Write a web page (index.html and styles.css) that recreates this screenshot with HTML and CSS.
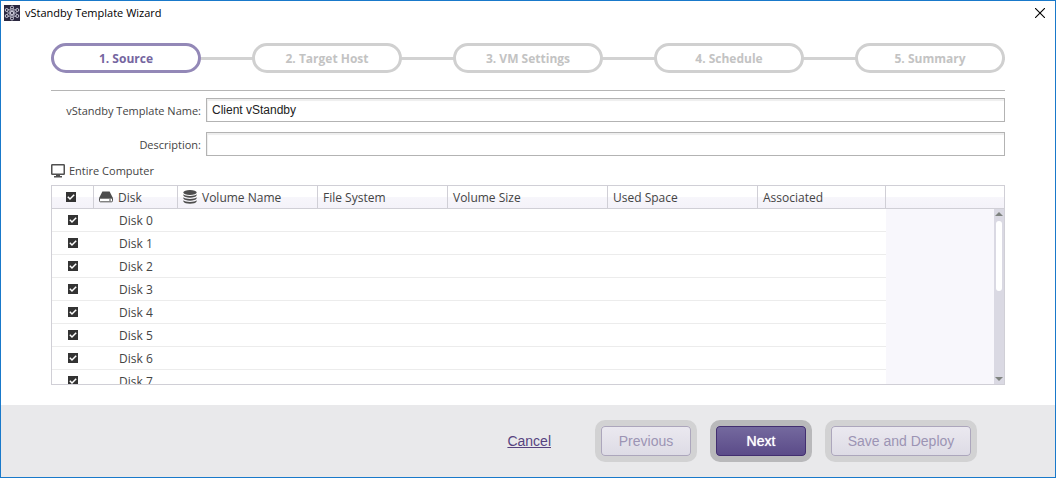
FILE: index.html
```html
<!DOCTYPE html>
<html lang="en">
<head>
<meta charset="utf-8">
<title>vStandby Template Wizard</title>
<link rel="stylesheet" href="styles.css">
</head>
<body>
<div class="window">
  <header class="titlebar">
    <svg class="app-icon" viewBox="0 0 16 16" aria-hidden="true">
      <rect width="16" height="16" fill="#2b2840"/>
      <g fill="none" stroke="#b3b1c2" stroke-width=".8">
        <ellipse cx="8" cy="8" rx="2.2" ry="5.6"/>
        <ellipse cx="8" cy="8" rx="2.2" ry="5.6" transform="rotate(60 8 8)"/>
        <ellipse cx="8" cy="8" rx="2.2" ry="5.6" transform="rotate(120 8 8)"/>
      </g>
      <g fill="#2b2840" stroke="#dddbe6" stroke-width=".9">
        <circle cx="8" cy="2.5" r="1.5"/><circle cx="8" cy="13.5" r="1.5"/>
        <circle cx="2.7" cy="5" r="1.5"/><circle cx="13.3" cy="5" r="1.5"/>
        <circle cx="2.7" cy="11" r="1.5"/><circle cx="13.3" cy="11" r="1.5"/>
        <circle cx="8" cy="8" r="1.6"/>
      </g>
    </svg>
    <h1 class="title">vStandby Template Wizard</h1>
    <button class="close" type="button" aria-label="Close">
      <svg viewBox="0 0 10 10" aria-hidden="true"><path d="M0 0L10 10M10 0L0 10" stroke="#000" stroke-width="1.1"/></svg>
    </button>
  </header>

  <main class="content">
    <ol class="steps">
      <li class="step current" aria-current="step">1. Source</li>
      <li class="step">2. Target Host</li>
      <li class="step">3. VM Settings</li>
      <li class="step">4. Schedule</li>
      <li class="step">5. Summary</li>
    </ol>

    <form class="fields">
      <label for="name">vStandby Template Name:</label>
      <input class="text" id="name" type="text" value="Client vStandby">
      <label for="desc">Description:</label>
      <input class="text" id="desc" type="text">
    </form>

    <div class="scope">
      <svg class="monitor" viewBox="0 0 14 14" aria-hidden="true">
        <rect x=".75" y=".75" width="12.5" height="9.5" rx=".6" fill="none" stroke="#505050" stroke-width="1.5"/>
        <path d="M5 10.5h4V12h2v1.6H3V12h2z" fill="#505050"/>
      </svg>
      <span>Entire Computer</span>
    </div>

    <div class="grid">
      <table class="disks">
        <colgroup>
          <col class="c-check"><col class="c-disk"><col class="c-name"><col class="c-fs"><col class="c-size"><col class="c-used"><col class="c-assoc"><col>
        </colgroup>
        <thead>
          <tr>
            <th class="check"><input type="checkbox" checked aria-label="Select all disks"></th>
            <th><span class="head"><svg class="drive" viewBox="0 0 14 12" aria-hidden="true"><path d="M3.4.6h7.2L14 7.2H0z" fill="#4d4d4d"/><path d="M.5 7.2h13v2.6a1 1 0 0 1-1 1h-11a1 1 0 0 1-1-1z" fill="#fff" stroke="#4d4d4d"/><path d="M10 9h2" stroke="#4d4d4d"/></svg>Disk</span></th>
            <th><span class="head"><svg class="stack" viewBox="0 0 14 14" aria-hidden="true"><g fill="#4d4d4d"><ellipse cx="7" cy="2.5" rx="6.6" ry="2.5"/><path d="M.4 4.3C2 6.4 12 6.4 13.6 4.3V5.6C12.6 8.3 1.4 8.3.4 5.6z"/><path d="M.4 7.3C2 9.4 12 9.4 13.6 7.3V8.6C12.6 11.3 1.4 11.3.4 8.6z"/><path d="M.4 10.3C2 12.4 12 12.4 13.6 10.3V11.6C12.6 14.6 1.4 14.6.4 11.6z"/></g></svg>Volume Name</span></th>
            <th>File System</th>
            <th>Volume Size</th>
            <th>Used Space</th>
            <th>Associated</th>
            <th class="filler"></th>
          </tr>
        </thead>
        <tbody>
          <tr><td class="check"><input type="checkbox" checked aria-label="Disk 0"></td><td class="disk">Disk 0</td><td></td><td></td><td></td><td></td><td></td><td class="filler"></td></tr>
          <tr><td class="check"><input type="checkbox" checked aria-label="Disk 1"></td><td class="disk">Disk 1</td><td></td><td></td><td></td><td></td><td></td><td class="filler"></td></tr>
          <tr><td class="check"><input type="checkbox" checked aria-label="Disk 2"></td><td class="disk">Disk 2</td><td></td><td></td><td></td><td></td><td></td><td class="filler"></td></tr>
          <tr><td class="check"><input type="checkbox" checked aria-label="Disk 3"></td><td class="disk">Disk 3</td><td></td><td></td><td></td><td></td><td></td><td class="filler"></td></tr>
          <tr><td class="check"><input type="checkbox" checked aria-label="Disk 4"></td><td class="disk">Disk 4</td><td></td><td></td><td></td><td></td><td></td><td class="filler"></td></tr>
          <tr><td class="check"><input type="checkbox" checked aria-label="Disk 5"></td><td class="disk">Disk 5</td><td></td><td></td><td></td><td></td><td></td><td class="filler"></td></tr>
          <tr><td class="check"><input type="checkbox" checked aria-label="Disk 6"></td><td class="disk">Disk 6</td><td></td><td></td><td></td><td></td><td></td><td class="filler"></td></tr>
          <tr><td class="check"><input type="checkbox" checked aria-label="Disk 7"></td><td class="disk">Disk 7</td><td></td><td></td><td></td><td></td><td></td><td class="filler"></td></tr>
        </tbody>
      </table>
      <div class="scrollbar" aria-hidden="true">
        <svg class="arrow" viewBox="0 0 8 4"><path d="M4 0L8 4H0z" fill="#7f8380"/></svg>
        <div class="track"><div class="thumb"></div></div>
        <svg class="arrow" viewBox="0 0 8 4"><path d="M0 0H8L4 4z" fill="#7f8380"/></svg>
      </div>
    </div>
  </main>

  <footer class="footer">
    <a class="cancel" href="#">Cancel</a>
    <button class="btn previous" type="button" disabled>Previous</button>
    <button class="btn next" type="button">Next</button>
    <button class="btn deploy" type="button" disabled>Save and Deploy</button>
  </footer>
</div>
</body>
</html>
```
FILE: styles.css
```css
* { box-sizing: border-box; }

body {
  margin: 0;
  font: 12px/16px "Open Sans", "Noto Sans", sans-serif;
  color: #444;
  background: #fff;
}

.window {
  display: flex;
  flex-direction: column;
  height: 100vh;
  border: 1px solid #1979ca;
}

.titlebar {
  display: flex;
  align-items: center;
  height: 24px;
  padding: 0 10px 0 3px;
}
.app-icon { width: 16px; height: 16px; }
.title {
  flex: 1;
  margin: 0 0 0 5px;
  font-size: 11px;
  font-weight: 400;
  color: #000;
}
.close {
  display: flex;
  padding: 0;
  border: 0;
  background: none;
}
.close svg { width: 10px; height: 10px; }

.content {
  flex: 1;
  display: flex;
  flex-direction: column;
  min-height: 0;
  padding: 18px 50px 20px;
}

.steps {
  display: flex;
  justify-content: space-between;
  margin: 0 0 17px;
  padding: 0;
  list-style: none;
  background: linear-gradient(#d2d2d2, #d2d2d2) center / 100% 3px no-repeat;
}
.step {
  width: 150px;
  height: 30px;
  border: 3px solid #d0d0d0;
  border-radius: 15px;
  background: #fff;
  color: #c3c3c3;
  font-weight: 700;
  line-height: 25px;
  text-align: center;
}
.step.current { border-color: #9388b7; color: #7566a0; }

.fields {
  display: grid;
  grid-template-columns: 150px 1fr;
  column-gap: 5px;
  row-gap: 10px;
  align-items: center;
  padding-top: 7px;
  border-top: 1px solid #b5b5b5;
}
.fields label {
  padding-top: 2px;
  font-size: 11px;
  text-align: right;
}
.text {
  width: 100%;
  height: 24px;
  padding: 0 5px 1px;
  border: 1px solid #b3b3b3;
  background: #fff;
  box-shadow: inset 1px 2px 1px #eee;
  font: 12px "Liberation Sans", Arial, sans-serif;
  color: #222;
}

.scope {
  display: flex;
  align-items: center;
  gap: 4px;
  margin: 7px 0 6px;
  font-size: 11px;
}
.monitor { width: 14px; height: 14px; }

.grid {
  position: relative;
  flex: 1;
  min-height: 0;
  overflow: hidden;
  border: 1px solid #d0cfd6;
}
.disks {
  width: 100%;
  border-collapse: separate;
  border-spacing: 0;
  table-layout: fixed;
}
.c-check { width: 42px; }
.c-disk { width: 84px; }
.c-name { width: 140px; }
.c-fs { width: 130px; }
.c-size { width: 160px; }
.c-used { width: 150px; }
.c-assoc { width: 128px; }
th, td { height: 23px; padding: 0; }
th {
  padding: 2px 5px 0;
  border-right: 1px solid #d0cfd6;
  border-bottom: 1px solid #d0cfd6;
  background: linear-gradient(#fff 50%, #f7f6fb 50%, #f4f2f9);
  font-weight: 400;
  text-align: left;
  white-space: nowrap;
}
th.filler { border-right: 0; }
td { border-bottom: 1px solid #ececec; }
td.filler { border-bottom: 0; background: #f8f7fc; }
td.disk { padding: 2px 0 0 25px; }
th.check { padding: 0 4px 0 0; }
.check input {
  appearance: none;
  display: block;
  width: 10px;
  height: 10px;
  margin: 0 auto;
  background: #333;
}
.check input:checked {
  background: #333 url("data:image/svg+xml,%3Csvg xmlns='http://www.w3.org/2000/svg' viewBox='0 0 10 10'%3E%3Cpath d='M1.8 4.8L4 7L8.2 2.8' fill='none' stroke='white' stroke-width='1.5'/%3E%3C/svg%3E") center / 10px 10px no-repeat;
}
.head { display: flex; align-items: center; gap: 5px; }
.drive { width: 14px; height: 12px; margin-bottom: 2px; }
.stack { width: 14px; height: 14px; margin-bottom: 2px; }

.scrollbar {
  position: absolute;
  top: 23px;
  right: 0;
  bottom: 0;
  display: flex;
  flex-direction: column;
  gap: 5px;
  width: 10px;
  padding: 3px 1px;
  background: #dad9e3;
}
.arrow { width: 8px; height: 4px; }
.track { flex: 1; }
.thumb {
  width: 6px;
  height: 70px;
  margin: 0 auto;
  border-radius: 3px;
  background: #fff;
}

.footer {
  display: flex;
  align-items: center;
  justify-content: flex-end;
  height: 72px;
  padding: 0 78px 0 20px;
  background: #e9e9eb;
  font: 14px/16px "Liberation Sans", Arial, sans-serif;
}
.cancel { margin-right: 44px; color: #56437f; }
.btn {
  height: 42px;
  padding: 0;
  border: 6px solid #d2d2d3;
  border-radius: 10px;
  background: linear-gradient(#ebe9f0, #dddbe5) padding-box;
  box-shadow: inset 0 0 0 1px #aca6bc;
  color: #9c94b4;
  font: inherit;
}
.previous { width: 102px; }
.next {
  width: 102px;
  margin: 0 13px;
  border-color: #b9b9bb;
  background: linear-gradient(#756a9f, #5a4a88) padding-box;
  box-shadow: inset 0 0 0 1px #422e70;
  color: #fff;
  text-shadow: 0 0 1px #fff;
}
.deploy { width: 152px; }
```
